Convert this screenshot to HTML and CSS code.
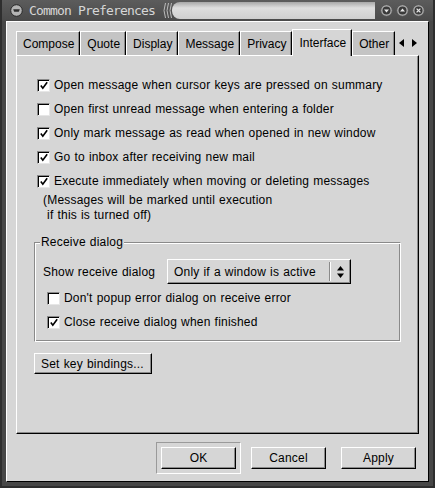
FILE: index.html
```html
<!DOCTYPE html>
<html>
<head>
<meta charset="utf-8">
<link rel="stylesheet" href="styles.css">
</head>
<body>
<div class="win">
  <div class="titlebar">
    <svg class="ticon" width="13" height="13" viewBox="0 0 13 13"><circle cx="6.5" cy="6.5" r="5.8" fill="#b4b4b4" stroke="#2a2a2a" stroke-width="1"/><path d="M3.2 5.2h6.6l-1 2.6h-4.6z" fill="#2e2e2e"/></svg>
    <span class="ttext">Common Preferences</span>
    <svg class="grip" width="12" height="19" viewBox="0 0 12 19"><path d="M3.5 2q-3 7.5 0 15M6.5 2q-3 7.5 0 15M9.5 2q-3 7.5 0 15" fill="none" stroke="#bcbcbc" stroke-width="1"/></svg>
    <span class="tbar"></span>
    <span class="tbtns">
      <svg width="13" height="13" viewBox="0 0 13 13"><circle cx="6.5" cy="6.5" r="5.8" fill="#b0b0b0" stroke="#555"/><circle cx="6.5" cy="6.5" r="4" fill="#3a3a3a"/><path d="M4 5.5h5l-2.5 3z" fill="#e8e8e8"/></svg>
      <svg width="13" height="13" viewBox="0 0 13 13"><circle cx="6.5" cy="6.5" r="5.8" fill="#b0b0b0" stroke="#555"/><circle cx="6.5" cy="6.5" r="4" fill="#3a3a3a"/><path d="M4 7.5h5l-2.5-3z" fill="#e8e8e8"/></svg>
      <svg width="13" height="13" viewBox="0 0 13 13"><circle cx="6.5" cy="6.5" r="5.8" fill="#b0b0b0" stroke="#555"/><circle cx="6.5" cy="6.5" r="4" fill="#3a3a3a"/><path d="M4.6 4.6l3.8 3.8M8.4 4.6l-3.8 3.8" stroke="#e8e8e8" stroke-width="1.3"/></svg>
    </span>
  </div>
  <div class="body">
    <div class="notebook">
      <div class="tabs">
        <span class="tab">Compose</span>
        <span class="tab">Quote</span>
        <span class="tab">Display</span>
        <span class="tab">Message</span>
        <span class="tab">Privacy</span>
        <span class="tab active">Interface</span>
        <span class="tab">Other</span>
        <span class="tab-arrows">
          <svg width="22" height="10" viewBox="0 0 22 10"><path d="M7 1v8L2 5z" fill="#000"/><path d="M15 1v8l5-4z" fill="#000"/></svg>
        </span>
      </div>
      <div class="page">
        <div class="check-row"><span class="box"><svg class="tick" width="11" height="11" viewBox="0 0 11 11"><path d="M2 5.5l2.2 3L9 2" fill="none" stroke="#000" stroke-width="1.8"/></svg></span>Open message when cursor keys are pressed on summary</div>
        <div class="check-row"><span class="box"></span>Open first unread message when entering a folder</div>
        <div class="check-row"><span class="box"><svg class="tick" width="11" height="11" viewBox="0 0 11 11"><path d="M2 5.5l2.2 3L9 2" fill="none" stroke="#000" stroke-width="1.8"/></svg></span>Only mark message as read when opened in new window</div>
        <div class="check-row"><span class="box"><svg class="tick" width="11" height="11" viewBox="0 0 11 11"><path d="M2 5.5l2.2 3L9 2" fill="none" stroke="#000" stroke-width="1.8"/></svg></span>Go to inbox after receiving new mail</div>
        <div class="check-row"><span class="box"><svg class="tick" width="11" height="11" viewBox="0 0 11 11"><path d="M2 5.5l2.2 3L9 2" fill="none" stroke="#000" stroke-width="1.8"/></svg></span>Execute immediately when moving or deleting messages</div>
        <div class="note">(Messages will be marked until execution
 if this is turned off)</div>

        <fieldset class="group">
          <legend>Receive dialog</legend>
          <div class="group-body">
            <div class="combo-row">
              <span class="combo-label">Show receive dialog</span>
              <span class="combo">
                <span class="combo-text">Only if a window is active</span>
                <span class="combo-sep"></span>
                <svg class="spin" width="9" height="14" viewBox="0 0 9 14"><path d="M4.5 1L8 5.5H1z" fill="#000"/><path d="M1 8.5h7L4.5 13z" fill="#000"/></svg>
              </span>
            </div>
            <div class="check-row sub"><span class="box"></span>Don't popup error dialog on receive error</div>
            <div class="check-row"><span class="box"><svg class="tick" width="11" height="11" viewBox="0 0 11 11"><path d="M2 5.5l2.2 3L9 2" fill="none" stroke="#000" stroke-width="1.8"/></svg></span>Close receive dialog when finished</div>
          </div>
        </fieldset>

        <span class="btn keybind">Set key bindings...</span>
      </div>
    </div>
    <div class="actions">
      <span class="default-frame"><span class="btn action">OK</span></span>
      <span class="btn action">Cancel</span>
      <span class="btn action">Apply</span>
    </div>
  </div>
</div>
</body>
</html>
```

FILE: styles.css
```css
* { box-sizing: border-box; }
html, body { margin: 0; padding: 0; }
body {
  width: 435px;
  height: 488px;
  overflow: hidden;
  background: #3c3c3c;
  font-family: "Liberation Sans", Arial, sans-serif;
  font-size: 12px;
  letter-spacing: 0.2px;
  word-spacing: 0.5px;
  color: #000;
}
.win {
  width: 435px;
  height: 488px;
  display: flex;
  flex-direction: column;
  background: #474747;
  border-left: 2px solid #2e2e2e;
  border-right: 2px solid #2e2e2e;
  border-bottom: 2px solid #2e2e2e;
}
.titlebar {
  flex: none;
  height: 21px;
  display: flex;
  align-items: center;
  padding: 0 8px 0 8px;
  background: linear-gradient(#5c5c5c, #4a4a4a);
}
.ticon { flex: none; }
.ttext {
  margin-left: 6px;
  font-family: "DejaVu Sans Mono", monospace;
  font-size: 13px;
  letter-spacing: -0.83px;
  word-spacing: 0;
  color: #d6d6d6;
  white-space: nowrap;
}
.grip { flex: none; margin-left: 7px; }
.tbar {
  flex: 1;
  height: 17px;
  margin-left: -2px;
  border-radius: 8px 0 0 8px;
  background: linear-gradient(#a8a8a8, #dedede 35%, #cfcfcf);
}
.tbtns {
  flex: none;
  display: flex;
  gap: 3px;
  margin-left: 5px;
}
.body {
  flex: 1;
  margin: 0 4px 4px 4px;
  background: #d6d6d6;
  border-left: 1px solid #fff;
  border-top: 1px solid #fff;
  border-right: 1px solid #000;
  border-bottom: 1px solid #000;
  padding: 7px 9px 0 9px;
  display: flex;
  flex-direction: column;
}
.notebook { display: flex; flex-direction: column; }
.tabs {
  height: 26px;
  display: flex;
  align-items: flex-end;
  position: relative;
  z-index: 1;
  letter-spacing: 0;
}
.tab {
  height: 24px;
  display: flex;
  align-items: center;
  padding: 1px 5px 0 6px;
  background: #c4c4c4;
  border-left: 1px solid #fff;
  border-top: 1px solid #fff;
  border-right: 1px solid #000;
  box-shadow: inset -1px 0 0 #8a8a8a;
}
.tab.active {
  height: 27px;
  margin-bottom: -1px;
  padding-top: 0;
  padding-bottom: 1px;
  background: #d6d6d6;
}
.tab-arrows { display: flex; align-items: center; height: 24px; margin-left: 2px; }
.page {
  height: 379px;
  border-top: 1px solid #fff;
  border-left: 1px solid #fff;
  border-right: 1px solid #000;
  border-bottom: 1px solid #000;
  box-shadow: inset -1px -1px 0 #8a8a8a;
  padding: 17px 17px 0 17px;
}
.check-row {
  height: 24px;
  display: flex;
  align-items: center;
  gap: 4px;
  margin-left: 3px;
  white-space: nowrap;
}
.box {
  flex: none;
  width: 13px;
  height: 13px;
  background: #fff;
  border: 1px solid;
  border-color: #8a8a8a #e6e6e6 #e6e6e6 #8a8a8a;
  box-shadow: inset 1px 1px 0 #000;
  display: flex;
  align-items: center;
  justify-content: center;
}
.tick { display: block; margin: 1px 0 0 1px; }
.note {
  margin-left: 9px;
  line-height: 15px;
  white-space: pre;
}
.group {
  margin: 12px 0 0 0;
  padding: 0;
  width: 367px;
  border: 1px solid;
  border-color: #8a8a8a #fff #fff #8a8a8a;
  box-shadow: inset 1px 1px 0 #fff, inset -1px -1px 0 #8a8a8a;
}
.group legend {
  margin-left: 5px;
  padding: 0 1px;
  line-height: 14px;
  background: #d6d6d6;
}
.group-body {
  padding: 10px 7px 7px 8px;
}
.combo-row {
  height: 25px;
  display: flex;
  align-items: center;
}
.combo-label { white-space: nowrap; min-width: 124px; }
.combo {
  width: 184px;
  height: 25px;
  display: flex;
  align-items: center;
  border: 1px solid;
  border-color: #fff #000 #000 #fff;
  box-shadow: inset -1px -1px 0 #8a8a8a;
  padding-left: 6px;
}
.combo-text { flex: 1; white-space: nowrap; }
.combo-sep {
  width: 2px;
  height: 19px;
  border-left: 1px solid #8a8a8a;
  border-right: 1px solid #fff;
  margin-right: 5px;
}
.spin { margin-right: 5px; }
.group-body .check-row { margin-left: 4px; }
.group-body .check-row.sub { margin-top: 2px; }
.btn {
  display: flex;
  align-items: center;
  background: #d6d6d6;
  border: 1px solid;
  border-color: #fff #000 #000 #fff;
  box-shadow: inset -1px -1px 0 #8a8a8a;
  white-space: nowrap;
}
.keybind {
  margin-top: 11px;
  width: max-content;
  height: 21px;
  padding: 0 7px 0 6px;
}
.actions {
  margin-top: 13px;
  padding-right: 3px;
  display: flex;
  justify-content: flex-end;
  gap: 15px;
}
.action {
  width: 75px;
  height: 22px;
  justify-content: center;
}
.default-frame {
  margin: -5px;
  padding: 4px;
  border: 1px solid;
  border-color: #9a9a9a #fff #fff #9a9a9a;
}
```
